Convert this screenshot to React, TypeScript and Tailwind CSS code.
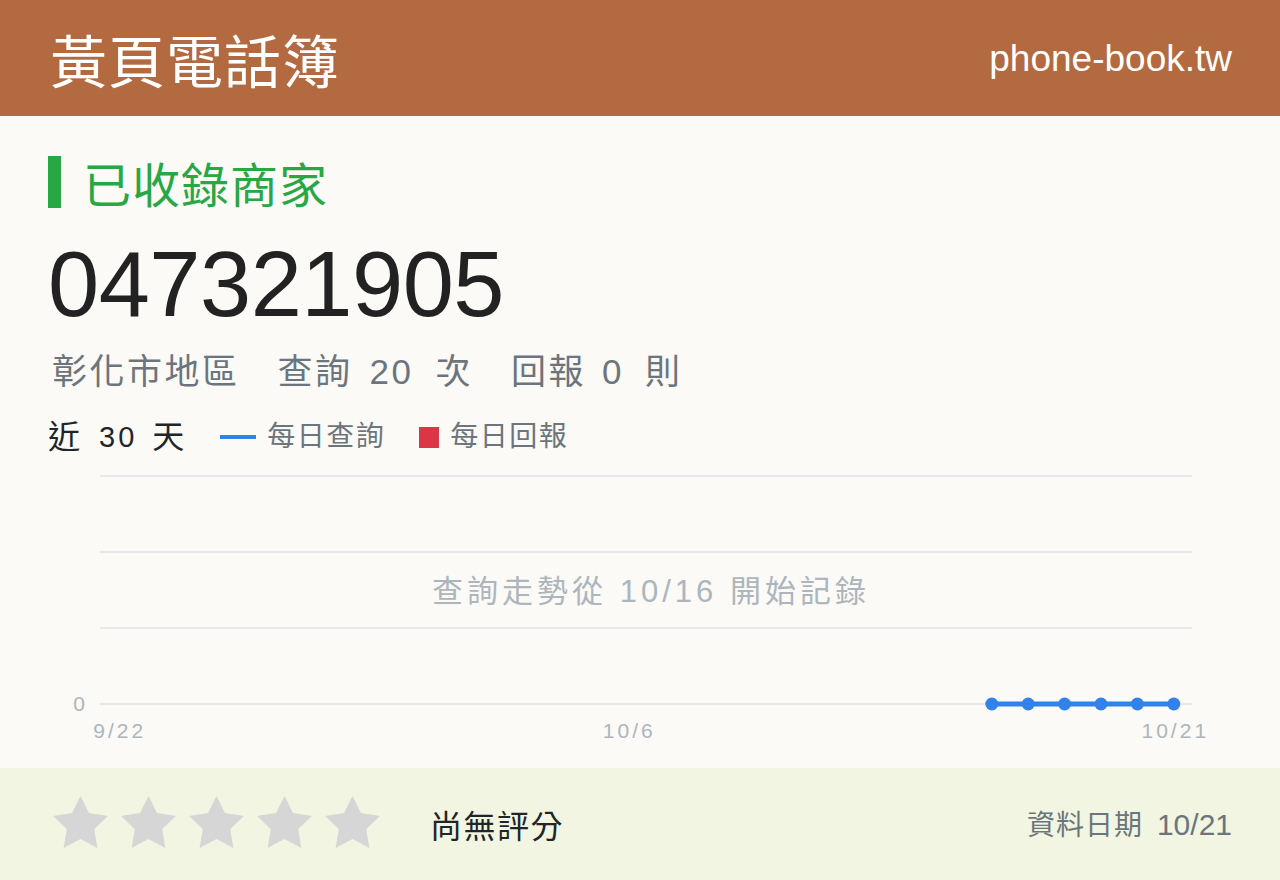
const days = Array.from({ length: 30 }, (_, i) => i)
const stepX = 36.4
const px = (i: number) => 52 + stepX / 2 + stepX * i

const Chart = () => {
  const grid = [16, 92, 168, 244]
  const recorded = days.filter((d) => d >= 24)
  return (
    <svg width={1184} height={300} viewBox="0 0 1184 300" className="block">
      {grid.map((y) => (
        <line key={y} x1={52} x2={1144} y1={y} y2={y} stroke="#e6e8eb" strokeWidth={2} />
      ))}
      <g fill="#adb5bd" fontSize={21} fontFamily="'Liberation Sans', 'Noto Sans CJK TC', sans-serif">
        <text x={37} y={251} textAnchor="end">0</text>
        <g letterSpacing={3}>
          <text x={px(0) + 1.5} y={278} textAnchor="middle">9/22</text>
          <text x={px(14) + 1.5} y={278} textAnchor="middle">10/6</text>
          <text x={px(29) + 1.5} y={278} textAnchor="middle">10/21</text>
        </g>
      </g>
      <text
        x={603}
        y={142}
        textAnchor="middle"
        fill="#adb5bd"
        fontSize={31}
        letterSpacing={4}
        fontFamily="'Liberation Sans', 'Noto Sans CJK TC', sans-serif"
      >
        查詢走勢從 10/16 開始記錄
      </text>
      <polyline
        points={recorded.map((d) => `${px(d)},244`).join(" ")}
        fill="none"
        stroke="#3182ea"
        strokeWidth={5}
      />
      {recorded.map((d) => (
        <circle key={d} cx={px(d)} cy={244} r={6.5} fill="#3182ea" />
      ))}
    </svg>
  )
}

const StarShape = () => (
  <svg width={55} height={52} viewBox="2 2 20 19.02" className="block">
    <polygon
      points="12,2 15.09,8.26 22,9.27 17,14.14 18.18,21.02 12,17.77 5.82,21.02 7,14.14 2,9.27 8.91,8.26"
      fill="#d6d6d6"
    />
  </svg>
)

export default function App() {
  return (
    <div className="flex min-h-[880px] flex-col bg-[#fbfaf6] font-['Liberation_Sans','Noto_Sans_CJK_TC',sans-serif]">
      <header className="flex h-[116px] items-center justify-between bg-[#b46a40] pl-[50px] pr-[48px] text-white">
        <h1 className="font-['Noto_Sans_CJK_TC',sans-serif] text-[57px] leading-none tracking-[1px]">黃頁電話簿</h1>
        <span className="text-[37px] leading-none">phone-book.tw</span>
      </header>

      <main className="flex flex-1 flex-col px-[48px]">
        <div className="mt-[40px] flex h-[52px] items-center gap-[22px]">
          <span className="h-[52px] w-[13px] bg-[#28a745]" />
          <h2 className="font-['Noto_Sans_CJK_TC',sans-serif] text-[48px] leading-none tracking-[1px] text-[#28a745]">
            已收錄商家
          </h2>
        </div>

        <div className="mt-[30px] text-[92px] leading-none tracking-[-0.5px] text-[#222]">047321905</div>

        <div className="mt-[24px] flex h-[35px] items-center text-[35px] leading-none tracking-[2.5px] text-[#6c757d]">
          <span className="ml-[4px]">彰化市地區</span>
          <span className="ml-[38px]">查詢</span>
          <span className="ml-[17px]">20</span>
          <span className="ml-[22px]">次</span>
          <span className="ml-[38px]">回報</span>
          <span className="ml-[16px]">0</span>
          <span className="ml-[21px]">則</span>
        </div>

        <div className="mt-[32px] flex h-[32px] items-center leading-none">
          <span className="text-[32px] text-[#212529]">近</span>
          <span className="ml-[19px] text-[29px] tracking-[3px] text-[#212529]">30</span>
          <span className="ml-[15px] text-[32px] text-[#212529]">天</span>
          <span className="ml-[36px] h-[4px] w-[36px] bg-[#3182ea]" />
          <span className="ml-[11px] text-[28px] tracking-[1.5px] text-[#6c757d]">每日查詢</span>
          <span className="ml-[34px] h-[21px] w-[20px] bg-[#dc3545]" />
          <span className="ml-[11px] text-[28px] tracking-[1.5px] text-[#6c757d]">每日回報</span>
        </div>

        <div className="mt-[7px]">
          <Chart />
        </div>
      </main>

      <footer className="flex h-[112px] items-center bg-[#f1f5e1] pl-[53px] pr-[48px]">
        <div className="mb-[5px] flex gap-[13px]">
          {[0, 1, 2, 3, 4].map((i) => (
            <StarShape key={i} />
          ))}
        </div>
        <span className="ml-[50px] font-['Noto_Sans_CJK_TC',sans-serif] text-[32px] tracking-[1.5px] text-[#212529]">
          尚無評分
        </span>
        <span className="ml-auto flex items-baseline gap-[14px] text-[#6c757d]">
          <span className="text-[28px] tracking-[1px]">資料日期</span>
          <span className="text-[30px]">10/21</span>
        </span>
      </footer>
    </div>
  )
}
